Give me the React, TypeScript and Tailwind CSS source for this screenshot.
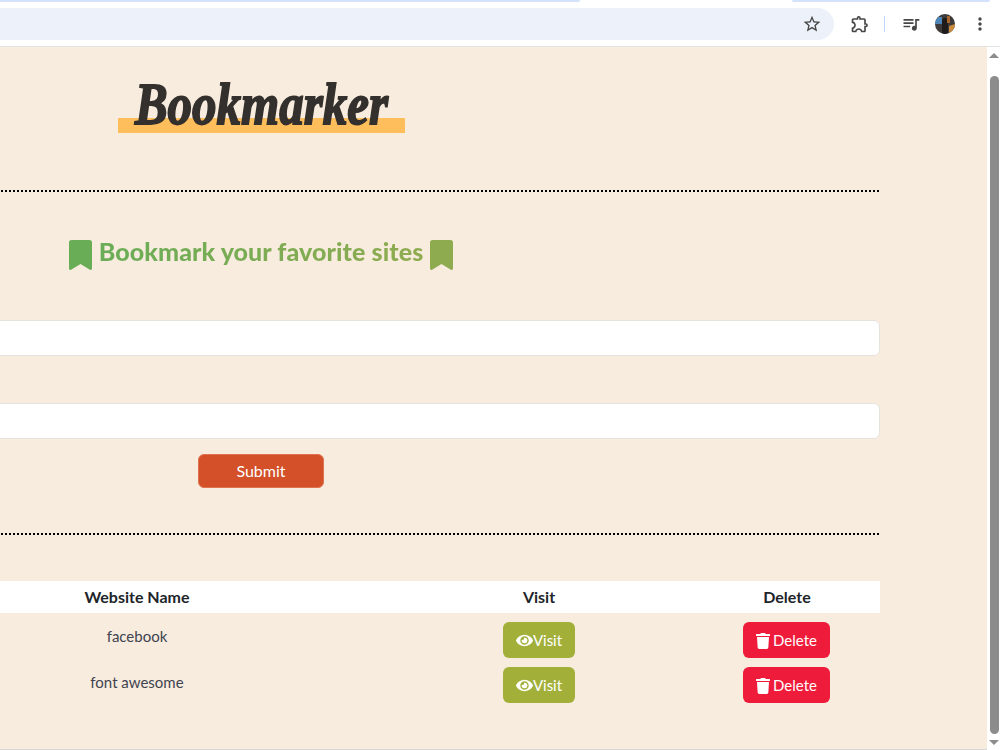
import { FaEye, FaTrash } from "react-icons/fa";
import { MdMoreVert, MdOutlineExtension, MdOutlineStarBorder, MdQueueMusic } from "react-icons/md";

const sites = ["facebook", "font awesome"];

function BookmarkIcon({ color }: { color: string }) {
  return (
    <svg width="23" height="30" viewBox="0 0 23 30">
      <path
        d="M2.5 0h18A2.5 2.5 0 0 1 23 2.5V28.6c0 1.1-1.2 1.7-2.1 1.1L11.5 24 2.1 29.7C1.200 30.300 0 29.700 0 28.600V2.500A2.500 2.500 0 0 1 2.500 0z"
        fill={color}
      />
    </svg>
  );
}

function Avatar() {
  return (
    <svg width="20" height="20" viewBox="0 0 20 20" className="rounded-full">
      <rect width="20" height="20" fill="#3d3a3c" />
      <rect x="0" y="3" width="7" height="7" fill="#4f86b8" />
      <path d="M7 20V7c0-4 6-4 6 0v13z" fill="#1f1b1b" />
      <path d="M0 14l6 6H0zM14 12l6-2v10h-6z" fill="#c98a3c" />
      <rect x="12" y="2" width="3" height="7" fill="#a8662d" />
    </svg>
  );
}

function BrowserBar() {
  return (
    <div className="h-[47px] shrink-0 bg-white border-b border-[#e3e3e3] flex flex-col">
      <div className="h-[2px] flex">
        <div className="w-[580px] bg-[#d3e3fd] rounded-br-[3px]" />
        <div className="w-[212px]" />
        <div className="w-[198px] bg-[#d3e3fd] rounded-bl-[3px] rounded-br-[3px]" />
      </div>
      <div className="flex items-center mt-[6px]">
        <div className="w-[834px] h-[32px] bg-[#edf2fa] rounded-r-full flex items-center justify-end pr-[12px]">
          <MdOutlineStarBorder className="text-[#474747] text-[20px]" />
        </div>
        <MdOutlineExtension className="ml-[16px] text-[#474747] text-[20px]" />
        <div className="ml-[14px] w-px h-[16px] bg-[#c2d7f5]" />
        <MdQueueMusic className="ml-[16px] text-[#474747] text-[20px]" />
        <div className="ml-[14px] flex">
          <Avatar />
        </div>
        <MdMoreVert className="ml-[15px] text-[#474747] text-[20px]" />
      </div>
    </div>
  );
}

function Scrollbar() {
  return (
    <div className="w-[13px] shrink-0 bg-white flex flex-col items-center pl-[1px]">
      <div className="mt-[6px] w-0 h-0 border-x-[5px] border-x-transparent border-b-[5px] border-b-[#8c8c8c]" />
      <div className="mt-[18px] w-[9px] flex-1 bg-[#8c8c8c] rounded-full" />
      <div className="mt-[6px] mb-[5px] w-0 h-0 border-x-[5px] border-x-transparent border-t-[5px] border-t-[#8c8c8c]" />
    </div>
  );
}

export default function App() {
  return (
    <div className="h-[750px] w-[1000px] overflow-hidden flex flex-col bg-white font-['Lato',sans-serif] text-[#212529]">
      <BrowserBar />
      <div className="flex-1 flex min-h-0">
        <div className="flex-1 bg-[#f8ecde] overflow-hidden border-b border-[#d9d9d9]">
          <div className="ml-[-358px] w-[1238px]">
            <header className="h-[144.500px] mr-[1px] border-b-[2px] border-dotted border-black flex justify-center items-start pt-[26px]">
              <h1 className="ml-[2px] px-[17px] h-[60px] leading-[60px] bg-[linear-gradient(transparent_75%,#ffbe5c_75%)] font-['Liberation_Serif',serif] italic font-bold text-[49px] text-[#33302d] [-webkit-text-stroke:1.5px_#33302d]">
                <span className="inline-block translate-y-[5px] scale-y-[1.2] origin-[50%_78%]">Bookmarker</span>
              </h1>
            </header>

            <div className="flex justify-center items-center gap-[7px] mt-[48px] h-[30px]">
              <BookmarkIcon color="#6aad57" />
              <h2 className="pb-[5px] font-black text-[25px] tracking-[0.08px] bg-[linear-gradient(90deg,#6aad57,#8fab50)] bg-clip-text text-transparent">
                Bookmark your favorite sites
              </h2>
              <BookmarkIcon color="#8fab50" />
            </div>

            <form className="flex flex-col items-center">
              <input className="mt-[50px] w-full h-[36px] bg-white border border-[#e6e3df] rounded-[6px]" />
              <input className="mt-[47px] w-full h-[36px] bg-white border border-[#e6e3df] rounded-[6px]" />
              <button
                type="button"
                className="mt-[15px] w-[126px] h-[34px] bg-[#d35029] border border-[#e0734f] rounded-[6px] text-white text-[16px]"
              >
                Submit
              </button>
            </form>

            <div className="mt-[45px] mr-[1px] border-t-[2px] border-dotted border-black" />

            <table className="mt-[46px] w-full table-fixed text-center">
              <colgroup>
                <col className="w-[248px]" />
                <col className="w-[494px]" />
                <col className="w-[310px]" />
                <col className="w-[186px]" />
              </colgroup>
              <thead>
                <tr className="bg-white h-[32px] text-[16px] font-bold">
                  <th />
                  <th>Website Name</th>
                  <th>Visit</th>
                  <th>Delete</th>
                </tr>
              </thead>
              <tbody className="text-[15px]">
                {sites.map((name, i) => (
                  <tr key={name}>
                    <td />
                    <td className={i === 0 ? "align-top pt-[9px] text-[#3f4450] leading-[28px]" : "align-top pt-[10px] text-[#3f4450] leading-[28px]"}>{name}</td>
                    <td className="pt-[9px]">
                      <button
                        type="button"
                        className="w-[72px] h-[36px] pt-[2px] inline-flex items-center justify-center bg-[#a2b03a] rounded-[6px] text-white align-top"
                      >
                        <FaEye className="text-[17px]" />
                        Visit
                      </button>
                    </td>
                    <td className="pt-[9px]">
                      <button
                        type="button"
                        className="w-[87px] h-[36px] pt-[2px] mr-[2px] inline-flex items-center justify-center gap-[2px] bg-[#ee1b3a] rounded-[6px] text-white align-top"
                      >
                        <FaTrash className="text-[16px]" />
                        Delete
                      </button>
                    </td>
                  </tr>
                ))}
              </tbody>
            </table>
          </div>
        </div>
        <Scrollbar />
      </div>
    </div>
  );
}
